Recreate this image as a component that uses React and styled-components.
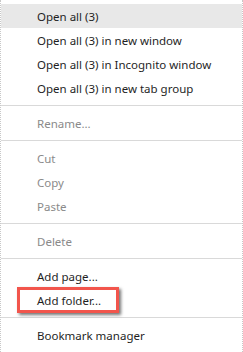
import React from 'react'
import styled, { createGlobalStyle } from 'styled-components'

const GlobalStyle = createGlobalStyle`
  body {
    margin: 0;
    background: #ffffff;
    font-family: "Noto Sans", "Open Sans", sans-serif;
  }
`

const Menu = styled.div`
  width: 243px;
  height: 352px;
  box-sizing: border-box;
  padding-top: 4px;
  border-left: 1px dotted #c8c8c8;
  border-right: 1px dotted #c8c8c8;
  background: #ffffff;
  display: flex;
  flex-direction: column;
`

const Item = styled.div`
  position: relative;
  height: 24px;
  display: flex;
  align-items: center;
  padding-left: 36px;
  font-size: 11.5px;
  color: ${p => (p.disabled ? '#8a8a8a' : '#1f1f1f')};
  background: ${p => (p.active ? '#e8e8e8' : 'transparent')};

  ${p => p.marked && `
    &::after {
      content: '';
      position: absolute;
      left: 16px;
      top: -1px;
      width: 96px;
      height: 20px;
      border: 3px solid #f2554c;
      box-shadow: 2px 2px 3px rgba(0, 0, 0, 0.55);
    }
  `}
`

const Separator = styled.div`
  height: 1px;
  margin: 5px 0;
  background: #d9d9d9;
`

const App = () => (
  <>
    <GlobalStyle />
    <Menu>
      <Item active>Open all (3)</Item>
      <Item>Open all (3) in new window</Item>
      <Item>Open all (3) in Incognito window</Item>
      <Item>Open all (3) in new tab group</Item>
      <Separator />
      <Item disabled>Rename...</Item>
      <Separator />
      <Item disabled>Cut</Item>
      <Item disabled>Copy</Item>
      <Item disabled>Paste</Item>
      <Separator />
      <Item disabled>Delete</Item>
      <Separator />
      <Item>Add page...</Item>
      <Item marked>Add folder...</Item>
      <Separator />
      <Item>Bookmark manager</Item>
    </Menu>
  </>
)

export default App
